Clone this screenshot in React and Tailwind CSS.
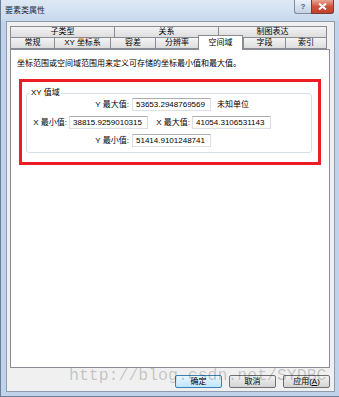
import React from "react";

const topTabs = [
  { label: "子类型", w: "w-[104px]" },
  { label: "关系", w: "w-[104px]" },
  { label: "制图表达", w: "w-[109px]" },
];

const tabs = [
  { label: "常规", w: "w-[44px]" },
  { label: "XY 坐标系", w: "w-[56px]" },
  { label: "容差", w: "w-[45px]" },
  { label: "分辨率", w: "w-[43px]" },
  { label: "空间域", w: "w-[45px]", active: true },
  { label: "字段", w: "w-[42px]" },
  { label: "索引", w: "w-[42px]" },
];

const Field = ({ value, className = "" }) => (
  <div
    className={`h-[13px] w-[79px] flex items-center pl-[3px] bg-white border border-[#dbdfe6] border-t-[#abadb3] ${className}`}
  >
    {value}
  </div>
);

const Button = ({ children, primary }) => (
  <div
    className={`w-[47px] h-[13px] flex items-center justify-center rounded-[2px] border bg-linear-to-b ${
      primary
        ? "border-[#3c7fb1] from-[#eaf6fd] to-[#bee6fd]"
        : "border-[#707070] from-[#f2f2f2] to-[#d4d4d4]"
    }`}
  >
    {children}
  </div>
);

export default function App() {
  return (
    <div className="relative w-[339px] h-[397px] overflow-hidden bg-[#bfd4ec] border-l border-b border-[#6d7f95] font-['Liberation_Sans','Noto_Sans_CJK_SC',sans-serif] text-[8px] leading-[10px] text-black">
      {/* title bar */}
      <div className="h-[21px] flex items-start justify-between bg-linear-to-b from-[#dfe9f5] to-[#c7d9ed]">
        <div className="pl-[4px] pt-[6px] text-[#1e2a3a]">要素类属性</div>
        <div className="flex mr-[5px]">
          <div className="w-[17px] h-[14px] flex items-center justify-center rounded-bl-[3px] border border-r-0 border-t-0 border-[#7d8ea3] bg-linear-to-b from-[#edf2f9] to-[#c3d1e2] text-[#4a5a6e] font-bold">
            ?
          </div>
          <div className="w-[23px] h-[14px] flex items-center justify-center rounded-br-[3px] border border-t-0 border-[#7a3a32] bg-linear-to-b from-[#e9a597] via-[#d3523c] to-[#c2412c]">
            <svg width="9" height="7" viewBox="0 0 9 7">
              <path d="M1 0.5 L8 6.5 M8 0.5 L1 6.5" stroke="white" strokeWidth="2" />
            </svg>
          </div>
        </div>
      </div>

      {/* client area */}
      <div className="ml-[5px] w-[329px] h-[371px] border border-[#8e9cae] bg-[#f0f0f0] flex flex-col pt-[4px] pl-[3px] pr-[4px] pb-[3px]">
        <div className="flex h-[11px]">
          {topTabs.map((t) => (
            <div
              key={t.label}
              className={`${t.w} h-[11px] flex items-center justify-center border border-r-0 last:border-r border-b-0 border-[#898c95] bg-linear-to-b from-[#f3f3f3] to-[#dedede]`}
            >
              {t.label}
            </div>
          ))}
        </div>
        <div className="flex h-[12px] items-start">
          {tabs.map((t) =>
            t.active ? (
              <div
                key={t.label}
                className={`${t.w} h-[15px] -mt-[2px] relative z-10 flex items-center justify-center border border-b-0 border-[#898c95] bg-white`}
              >
                {t.label}
              </div>
            ) : (
              <div
                key={t.label}
                className={`${t.w} h-[12px] flex items-center justify-center border border-r-0 last:border-r border-[#898c95] bg-linear-to-b from-[#f3f3f3] to-[#dedede]`}
              >
                {t.label}
              </div>
            )
          )}
        </div>

        {/* panel */}
        <div className="w-[320px] h-[319px] border border-[#898c95] bg-white pt-[9px] pl-[6px]">
          <div>坐标范围或空间域范围用来定义可存储的坐标最小值和最大值。</div>
          <div className="mt-[10px] ml-[2px] w-[302px] h-[86px] border-[3px] border-[#ee1c24]">
            <fieldset className="mt-[6px] ml-[4px] w-[286px] border border-[#d5dfe5] rounded-[3px] pb-[5px]">
              <legend className="ml-[3px] px-[1px] h-[10px]">XY 值域</legend>
              <div className="flex flex-col gap-[5px]">
                <div className="flex items-center">
                  <div className="w-[102px] text-right">Y 最大值:</div>
                  <Field value="53653.2948769569" className="ml-[3px]" />
                  <div className="ml-[6px]">未知单位</div>
                </div>
                <div className="flex items-center">
                  <div className="w-[40px] text-right">X 最小值:</div>
                  <Field value="38815.9259010315" className="ml-[2px]" />
                  <div className="ml-[6px] w-[36px] text-right">X 最大值:</div>
                  <Field value="41054.3106531143" className="ml-[2px]" />
                </div>
                <div className="flex items-center">
                  <div className="w-[102px] text-right">Y 最小值:</div>
                  <Field value="51414.9101248741" className="ml-[3px]" />
                </div>
              </div>
            </fieldset>
          </div>
        </div>

        <div className="mt-[7px] flex justify-end gap-[7px]">
          <Button primary>确定</Button>
          <Button>取消</Button>
          <Button>
            应用(<span className="underline">A</span>)
          </Button>
        </div>
      </div>

      {/* watermark */}
      <div className="absolute left-[68px] top-[366px] font-['Liberation_Mono',monospace] text-[16.5px] leading-[20px] text-black/20 pointer-events-none">
        http://blog.csdn.net/SYDBC
      </div>
    </div>
  );
}
